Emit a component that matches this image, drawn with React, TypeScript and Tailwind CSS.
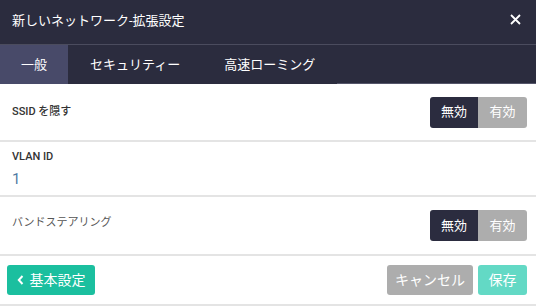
import React from "react";

const font = { fontFamily: 'Roboto, "Noto Sans CJK JP", "Noto Sans", sans-serif' };

function Toggle() {
  return (
    <div className="flex h-[31px] rounded-[3px] overflow-hidden text-[13px] text-white">
      <div className="w-[48px] flex items-center justify-center bg-[#2b2c3f]">無効</div>
      <div className="w-[49px] flex items-center justify-center bg-[#adadad]">有効</div>
    </div>
  );
}

export default function App() {
  return (
    <div className="w-[536px] h-[307px] bg-white flex flex-col overflow-hidden" style={font}>
      <div className="h-[44px] bg-[#2b2c3e] flex items-center justify-between pl-3 pr-[15px] text-white text-[13px] shrink-0">
        <span className="-mt-[2px]">新しいネットワーク-拡張設定</span>
        <svg width="11" height="11" viewBox="0 0 11 11" className="-mt-[5px]">
          <path d="M1 1 L10 10 M10 1 L1 10" stroke="white" strokeWidth="1.8" />
        </svg>
      </div>
      <div className="h-px bg-[#4b4c5e] shrink-0" />
      <div className="h-[39px] bg-[#2b2c3e] flex text-white text-[13px] shrink-0">
        <div className="w-[68px] bg-[#484a69] flex items-center justify-center">一般</div>
        <div className="px-[22px] flex items-center">セキュリティー</div>
        <div className="px-[22px] flex items-center">高速ローミング</div>
        <div className="flex-1 border-b border-[#55566a]" />
      </div>
      <div className="h-[58px] border-b-2 border-[#e4e4e4] flex items-center justify-between pl-3 pr-[9px] shrink-0">
        <span className="text-[11px] font-medium text-[#333]">SSID を隠す</span>
        <Toggle />
      </div>
      <div className="h-[55px] border-b-2 border-[#e4e4e4] flex flex-col pl-3 pt-[7px] shrink-0">
        <span className="text-[11px] font-medium text-[#333] leading-[16px]">VLAN ID</span>
        <span className="text-[15px] text-[#4f7ba3] mt-[4px] leading-[20px]">1</span>
      </div>
      <div className="h-[59px] border-b-2 border-[#e4e4e4] flex items-center justify-between pl-3 pr-[9px] shrink-0">
        <span className="text-[11px] text-[#555] -mt-[5px]">バンドステアリング</span>
        <Toggle />
      </div>
      <div className="h-[50px] border-b-2 border-[#e4e4e4] flex items-center justify-between pl-[7px] pr-[9px] shrink-0">
        <button className="h-[30px] w-[88px] rounded-[3px] bg-[#1bbf9f] text-white text-[14px] flex items-center justify-center gap-[6px]">
          <svg width="7" height="10" viewBox="0 0 7 10">
            <path d="M5.5 1 L1.8 5 L5.5 9" stroke="white" strokeWidth="2" fill="none" />
          </svg>
          <span>基本設定</span>
        </button>
        <div className="flex gap-[5px]">
          <button className="h-[30px] w-[86px] rounded-[3px] bg-[#adadad] text-white text-[14px]">キャンセル</button>
          <button className="h-[30px] w-[49px] rounded-[3px] bg-[#63d9c5] text-white text-[14px]">保存</button>
        </div>
      </div>
    </div>
  );
}
